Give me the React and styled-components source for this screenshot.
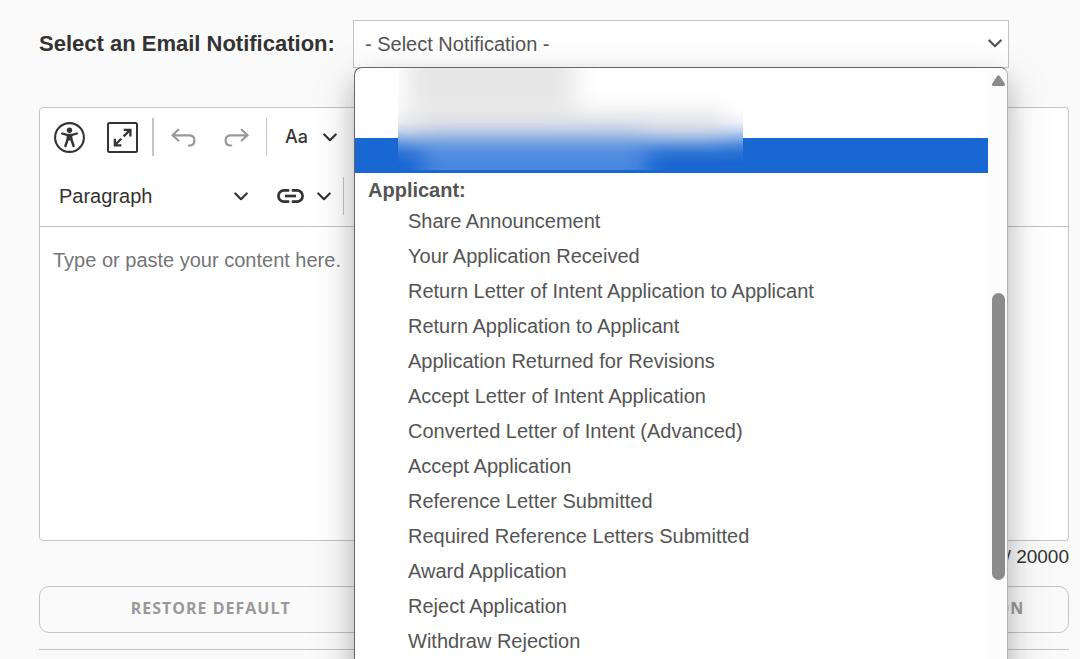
import React, {useState} from "react";
import styled, {createGlobalStyle, css} from "styled-components";

const COLORS = {
    page: "#fafafa",
    text: "#333333",
    option: "#545454",
    muted: "#999999",
    border: "#c4c4c8",
    selected: "#1967d2",
}

const APPLICANT_OPTIONS = [
    "Share Announcement",
    "Your Application Received",
    "Return Letter of Intent Application to Applicant",
    "Return Application to Applicant",
    "Application Returned for Revisions",
    "Accept Letter of Intent Application",
    "Converted Letter of Intent (Advanced)",
    "Accept Application",
    "Reference Letter Submitted",
    "Required Reference Letters Submitted",
    "Award Application",
    "Reject Application",
    "Withdraw Rejection",
];

const ChevronIcon = () => (
    <svg width="14" height="9" viewBox="0 0 14 9" fill="none" stroke="currentColor" strokeWidth="2.2"
         strokeLinecap="round" strokeLinejoin="round" aria-hidden="true">
        <path d="M1.3 1.5 7 7.2l5.7-5.7"/>
    </svg>
);

const AccessibilityIcon = () => (
    <svg width="31" height="31" viewBox="0 0 31 31" fill="none" stroke="currentColor" aria-hidden="true">
        <circle cx="15.5" cy="15.5" r="14.4" strokeWidth="2.1"/>
        <circle cx="15.5" cy="8.2" r="2.7" fill="currentColor" stroke="none"/>
        <path d="M8 11.5l5 1.4h5l5-1.4" strokeWidth="2.2" strokeLinecap="round" strokeLinejoin="round"/>
        <path d="M12.6 12h5.8v6.4h-5.8z" fill="currentColor" stroke="none"/>
        <path d="M13.8 17l-2.4 7M17.2 17l2.4 7" strokeWidth="2.4" strokeLinecap="round"/>
    </svg>
);

const FullscreenIcon = () => (
    <svg width="31" height="31" viewBox="0 0 31 31" fill="none" stroke="currentColor" aria-hidden="true">
        <rect x="1" y="1" width="29" height="29" rx="1.5" strokeWidth="2"/>
        <path d="M16.6 14.4l6.4-6.4M16.8 7.9h6.6v6.6M14.2 16.8l-6.2 6.2M14.4 23.3H7.9v-6.5" strokeWidth="2.3"/>
    </svg>
);

const UndoIcon = () => (
    <svg width="26" height="19" viewBox="0 0 26 19" fill="none" stroke="currentColor" strokeWidth="2.2"
         strokeLinecap="round" strokeLinejoin="round" aria-hidden="true">
        <path d="M7.3 1.8 1.5 7.3l5.8 5.2"/>
        <path d="M2 7.3h17.2a5.2 5.2 0 0 1 0 10.2h-1.4"/>
    </svg>
);

const RedoIcon = () => (
    <svg width="26" height="19" viewBox="0 0 26 19" fill="none" stroke="currentColor" strokeWidth="2.2"
         strokeLinecap="round" strokeLinejoin="round" aria-hidden="true">
        <path d="M18.7 1.8l5.8 5.5-5.8 5.2"/>
        <path d="M24 7.3H6.8a5.2 5.2 0 0 0 0 10.2h1.4"/>
    </svg>
);

const LinkIcon = () => (
    <svg width="27" height="14" viewBox="0 0 27 14" fill="none" stroke="currentColor" strokeWidth="2.7" aria-hidden="true">
        <path d="M12.2 1.4H7a5.6 5.6 0 0 0 0 11.2h5.2M14.8 1.4H20a5.6 5.6 0 0 1 0 11.2h-5.2"/>
        <path d="M8 7h11"/>
    </svg>
);

const ScrollUpIcon = () => (
    <svg width="13" height="11" viewBox="0 0 13 11" aria-hidden="true">
        <path d="M5.2 1Q6.5-.6 7.8 1l4.9 7.4Q13.6 10.8 11.6 11H1.4Q-.6 10.8.3 8.4z" fill="#8b8b8b"/>
    </svg>
);

const App = () => {
    const [content, setContent] = useState("");

    return (
        <Page>
            <GlobalStyle/>
            <SelectRow>
                <SelectLabel htmlFor="notification">Select an Email Notification:</SelectLabel>
                <SelectWrapper>
                    <NotificationSelect id="notification" defaultValue="">
                        <option value="">- Select Notification -</option>
                        {APPLICANT_OPTIONS.map(name => <option key={name}>{name}</option>)}
                    </NotificationSelect>
                    <SelectArrow><ChevronIcon/></SelectArrow>
                    <Popup>
                        <OptionList role="listbox" aria-label="Notifications">
                            <Option/>
                            <Option/>
                            <Option $selected/>
                            <GroupLabel>Applicant:</GroupLabel>
                            {APPLICANT_OPTIONS.map(name => (
                                <Option key={name} role="option">{name}</Option>
                            ))}
                        </OptionList>
                        <ScrollTrack>
                            <ScrollUpIcon/>
                            <ScrollThumb/>
                        </ScrollTrack>
                        <Redacted/>
                    </Popup>
                </SelectWrapper>
            </SelectRow>

            <Editor>
                <Toolbar>
                    <ToolbarRow $height={58}>
                        <ToolButton $width={31} aria-label="Accessibility"><AccessibilityIcon/></ToolButton>
                        <ToolButton $width={31} $before={22} aria-label="Fullscreen"><FullscreenIcon/></ToolButton>
                        <Separator $width={2} $before={14}/>
                        <ToolButton $width={26} $before={17} $muted aria-label="Undo"><UndoIcon/></ToolButton>
                        <ToolButton $width={26} $before={26} $muted aria-label="Redo"><RedoIcon/></ToolButton>
                        <Separator $width={1} $before={17}/>
                        <FontButton $before={18}>Aa <ChevronIcon/></FontButton>
                    </ToolbarRow>
                    <ToolbarRow $height={60}>
                        <HeadingButton>Paragraph <ChevronIcon/></HeadingButton>
                        <ToolButton $before={29} aria-label="Link"><LinkIcon/><ChevronIcon/></ToolButton>
                        <Separator $width={1} $before={12}/>
                    </ToolbarRow>
                </Toolbar>
                <Content
                    aria-label="Message"
                    placeholder="Type or paste your content here."
                    value={content}
                    onChange={e => setContent(e.target.value)}
                />
            </Editor>
            <Counter>{content.length} / 20000</Counter>

            <Actions>
                <ActionButton>Restore default</ActionButton>
                <ActionButton>Select email notification</ActionButton>
            </Actions>
            <Divider/>
        </Page>
    )
}

const GlobalStyle = createGlobalStyle`
    *, *::before, *::after {
        box-sizing: border-box;
    }

    body {
        margin: 0;
        background: ${COLORS.page};
        color: ${COLORS.text};
        font: 20px/24px "Liberation Sans", Arial, sans-serif;
    }
`

const Page = styled.main`
    min-height: 100vh;
    max-height: 100vh;
    overflow: hidden;
    padding: 20px 11px 0 39px;
`

const SelectRow = styled.div`
    display: flex;
    align-items: center;
    padding-right: 60px;
`

const SelectLabel = styled.label`
    flex: 0 0 314px;
    font-size: 22px;
    font-weight: 700;
`

const SelectWrapper = styled.div`
    position: relative;
    flex: 1;
`

const NotificationSelect = styled.select`
    display: block;
    appearance: none;
    width: 100%;
    height: 48px;
    padding: 0 40px 0 11px;
    border: 1px solid ${COLORS.border};
    border-radius: 0;
    background: white;
    color: ${COLORS.option};
    font: inherit;
`

const SelectArrow = styled.span`
    position: absolute;
    top: 0;
    right: 7px;
    height: 46px;
    display: flex;
    align-items: center;
    color: ${COLORS.option};
    pointer-events: none;
`

const Popup = styled.div`
    position: absolute;
    z-index: 1;
    top: 47px;
    left: 1px;
    right: 1px;
    display: flex;
    padding-bottom: 40px;
    overflow: hidden;
    border: 1px solid #666666;
    border-right-color: #b4b4b4;
    border-radius: 8px;
    background: white;
    box-shadow: 0 14px 48px rgba(0, 0, 0, 0.16), 0 12px 24px rgba(0, 0, 0, 0.18);
`

const OptionList = styled.div`
    flex: 1;
`

const Option = styled.div`
    height: 35px;
    padding-left: 53px;
    color: ${COLORS.option};
    line-height: 35px;
    ${({$selected}) => $selected && css`
        background: ${COLORS.selected};
    `}
`

const GroupLabel = styled.div`
    height: 31px;
    padding-left: 13px;
    color: ${COLORS.option};
    font-weight: 700;
    line-height: 34px;
`

const ScrollTrack = styled.div`
    display: flex;
    flex-direction: column;
    align-items: center;
    gap: 207px;
    width: 19px;
    padding: 7px 0 0 1px;
    background: #fcfcfc;
`

const ScrollThumb = styled.div`
    width: 13px;
    height: 287px;
    border-radius: 7px;
    background: #8b8b8b;
`

const Redacted = styled.div`
    position: absolute;
    top: 0;
    left: 43px;
    width: 345px;
    height: 102px;
    overflow: hidden;
    background: linear-gradient(
        #ffffff 0, #ffffff 42px, #f0f4fc 54px, #c6d8f4 62px, #8fb3ea 69px,
        #4f8bde 77px, #2a72d5 85px, #1967d2 96px
    );

    &::before {
        content: "";
        position: absolute;
        inset: -40px;
        background:
            linear-gradient(#e3e3e3e6, #e3e3e3e6) 50px 20px / 166px 60px no-repeat,
            linear-gradient(#d0d0d099, #d0d0d099) 44px 84px / 322px 24px no-repeat,
            linear-gradient(#6c9fe899, #6c9fe899) 64px 110px / 224px 60px no-repeat;
        filter: blur(12px);
    }
`

const Editor = styled.section`
    margin-top: 39px;
    border: 1px solid ${COLORS.border};
    border-radius: 4px;
    background: white;
`

const Toolbar = styled.div`
    padding-left: 14px;
    border-bottom: 1px solid ${COLORS.border};
`

const ToolbarRow = styled.div`
    display: flex;
    align-items: center;
    height: ${({$height}) => $height}px;
`

const ToolButton = styled.button`
    display: flex;
    align-items: center;
    justify-content: center;
    gap: 13px;
    width: ${({$width}) => $width ? `${$width}px` : "auto"};
    height: 38px;
    margin-left: ${({$before}) => $before || 0}px;
    padding: 0;
    border: 0;
    background: none;
    color: ${({$muted}) => $muted ? COLORS.muted : COLORS.text};
    font: inherit;

    svg {
        flex: none;
    }
`

const FontButton = styled(ToolButton)`
    gap: 15px;
    font-family: Inter, sans-serif;
    font-size: 18px;
    font-weight: 500;
`

const HeadingButton = styled(ToolButton)`
    justify-content: space-between;
    width: 194px;
    padding-left: 5px;
`

const Separator = styled.span`
    width: ${({$width}) => $width}px;
    height: 38px;
    margin-left: ${({$before}) => $before}px;
    background: ${COLORS.border};
`

const Content = styled.textarea`
    display: block;
    width: 100%;
    height: 313px;
    padding: 21px 13px;
    border: 0;
    outline: 0;
    resize: none;
    background: none;
    color: ${COLORS.text};
    font: inherit;

    &::placeholder {
        color: #757575;
    }
`

const Counter = styled.div`
    margin-top: 4px;
    font-size: 19px;
    text-align: right;
`

const Actions = styled.div`
    display: flex;
    justify-content: space-between;
    margin-top: 17px;
`

const ActionButton = styled.button`
    width: calc(100% / 3);
    height: 47px;
    padding: 0 0 3px;
    border: 1px solid ${COLORS.border};
    border-radius: 10px;
    background: none;
    color: ${COLORS.muted};
    font: 700 16px/24px "Open Sans", "Noto Sans", sans-serif;
    letter-spacing: 1px;
    text-transform: uppercase;
`

const Divider = styled.hr`
    margin: 16px 0 0;
    border: 0;
    border-top: 1px solid ${COLORS.border};
`

export default App;
